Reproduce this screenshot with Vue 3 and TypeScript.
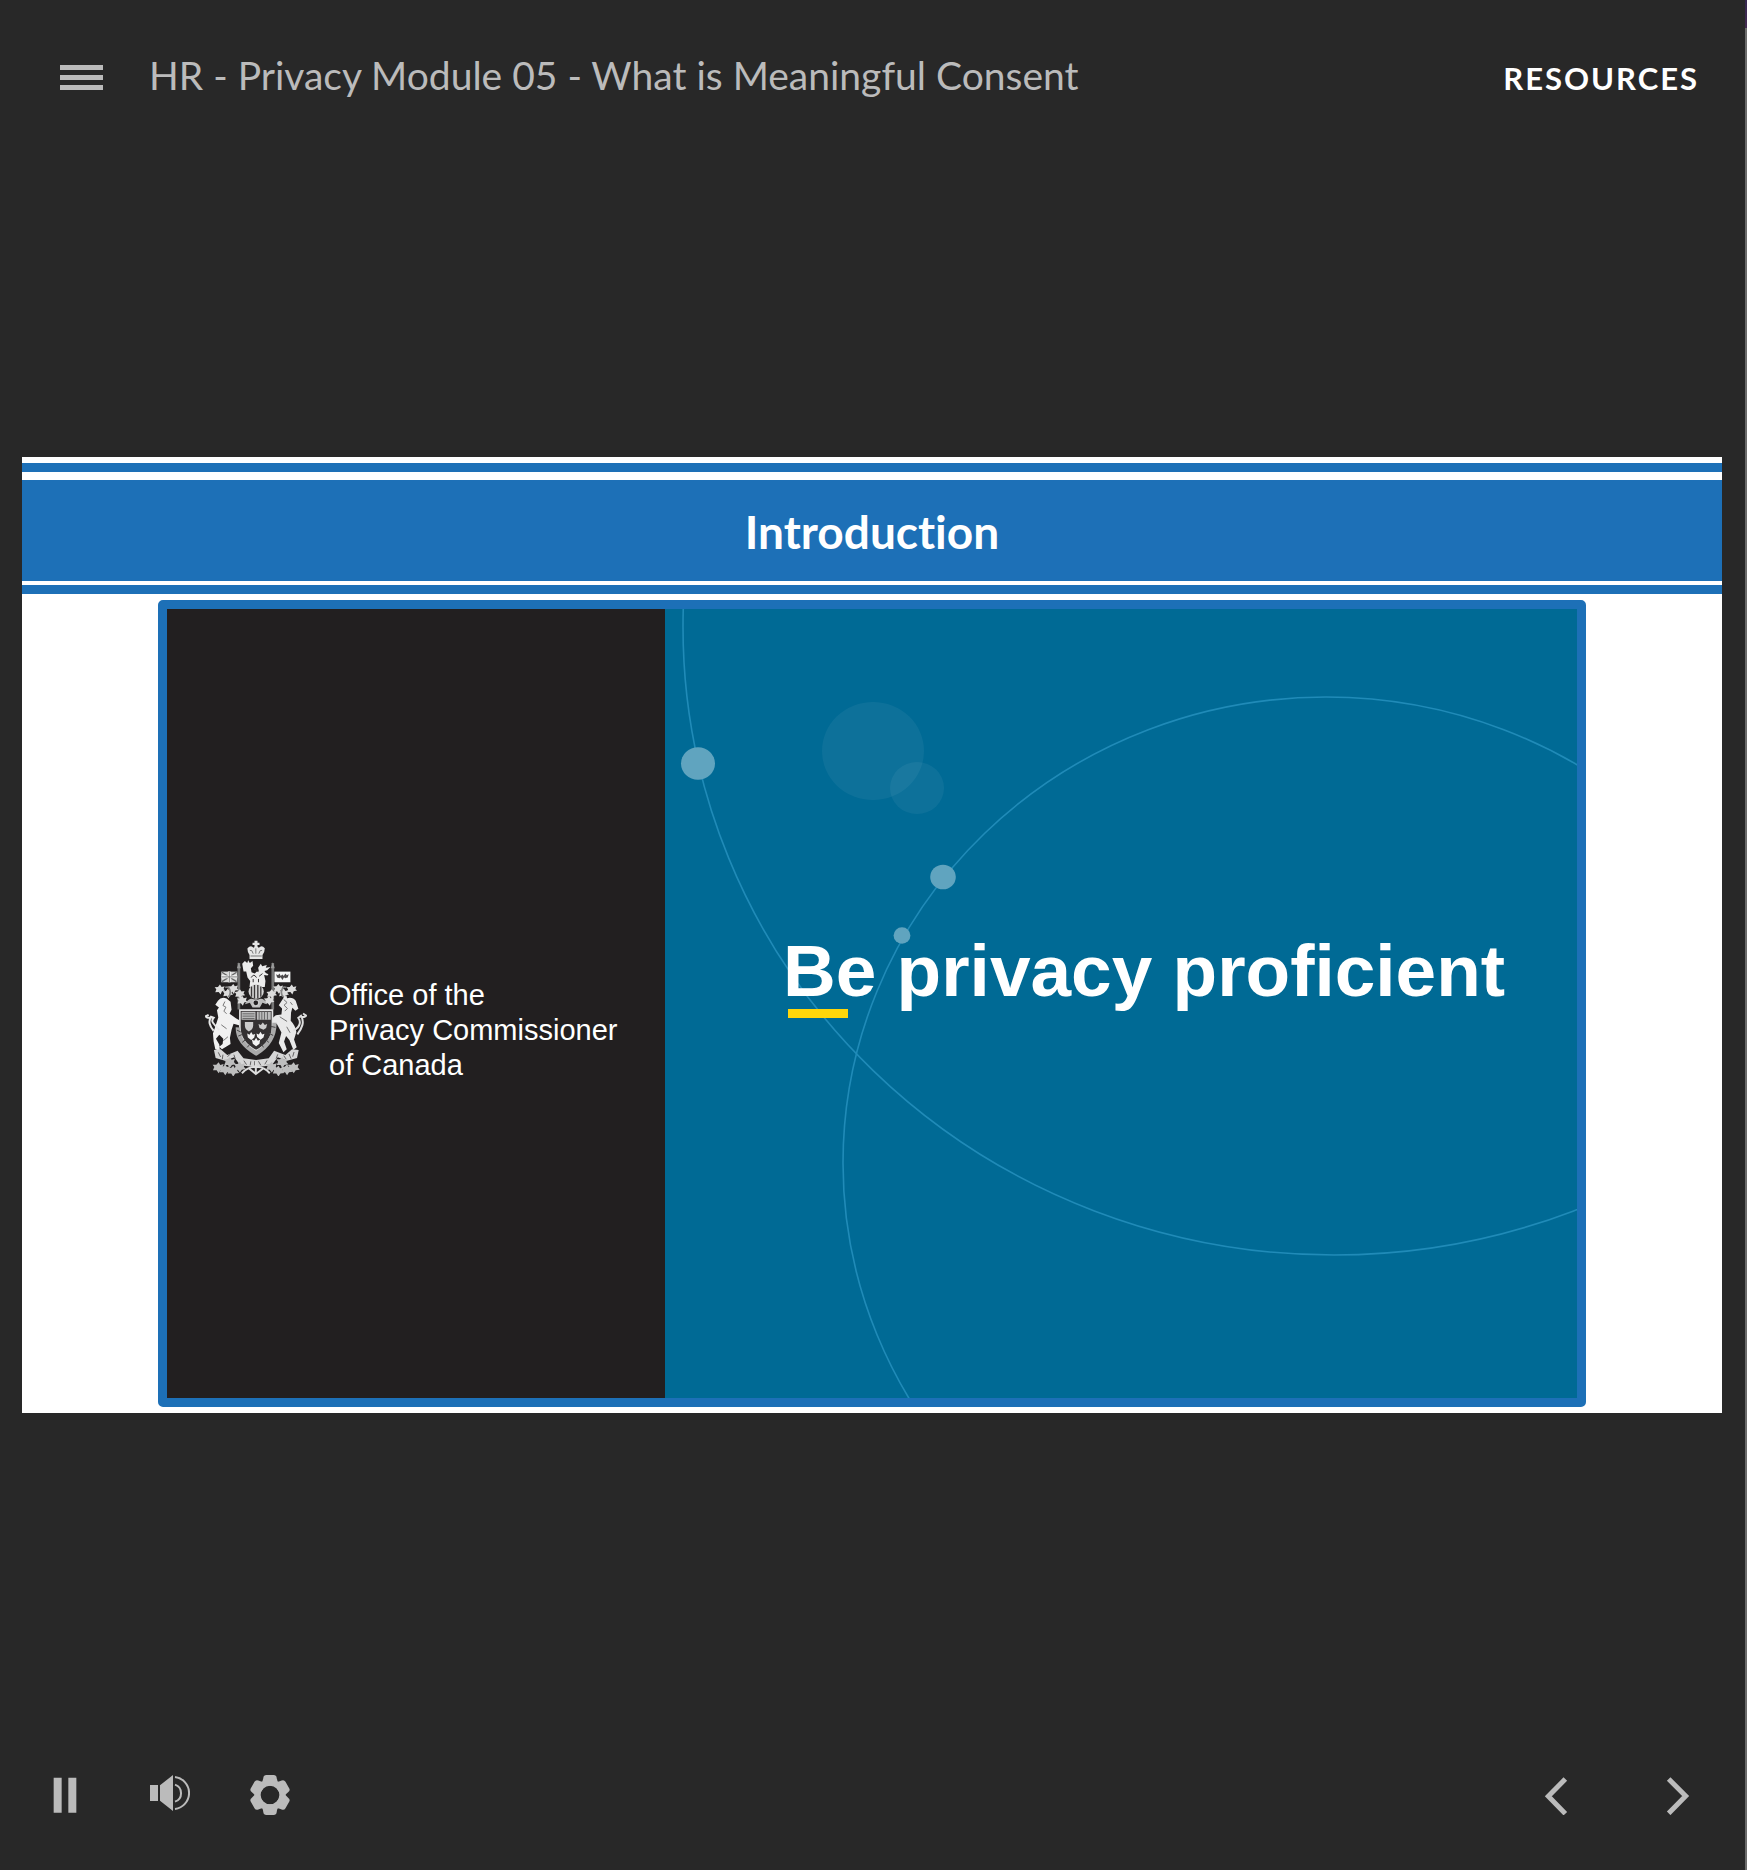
<script setup lang="ts">
import { ref } from 'vue'

const courseTitle = 'HR - Privacy Module 05 - What is Meaningful Consent'
const playing = ref(true)
const gearTeeth = [0, 60, 120, 180, 240, 300]
const leaves = [
  [88, 212], [112, 224], [128, 210], [148, 226], [155, 246], [236, 246], [244, 226], [264, 210], [280, 224], [304, 212],
]
const flowers = [
  [84, 446], [104, 452], [118, 430], [128, 456], [148, 444], [244, 444], [264, 456], [276, 430], [290, 452], [310, 446],
]
</script>

<template>
  <div class="player">
    <header class="topbar">
      <button class="icon-btn menu-btn" type="button" aria-label="Menu">
        <svg width="43" height="25" viewBox="0 0 43 25">
          <path d="M0 0H43V5H0ZM0 10H43V15H0ZM0 20H43V25H0Z" fill="currentColor" />
        </svg>
      </button>
      <h1 class="course-title">{{ courseTitle }}</h1>
      <button class="resources" type="button">RESOURCES</button>
    </header>

    <main class="stage">
      <section class="slide">
        <div class="rule rule-top"></div>
        <h2 class="slide-title">Introduction</h2>
        <div class="rule rule-bottom"></div>

        <div class="video">
          <div class="sponsor">
            <svg class="arms" viewBox="40 60 310 412" role="img" aria-label="Arms of Canada">
              <!-- crown -->
              <g fill="#e6e6e6">
                <path d="M192 65h9v6h6v7h-6v6h-9v-6h-6v-7h6z" />
                <path d="M171 88q10-12 18-2l8-6 8 6q9-10 18 2 0 12-7 20v12h-39v-12q-7-8-6-20z" />
              </g>
              <path d="M178 94q7-3 10 10M215 94q-7-3-10 10M196 88v16M180 111h34" fill="none" stroke="#777" stroke-width="3" />
              <!-- crest lion -->
              <path d="M155 134l8-8 7 6 3-8 5 8 8-6 2 14-7 8 2 12 10 4q4-8 12-8l-2-10 8-12 4 8 14-4-3 8 14-2-10 10-8 2 4 6 8 4-3 4-10-2 4 18-2 18h-46l2-18-8-10-4-18-8 0z" fill="#ececec" />
              <path d="M182 176q8-14 16 0M190 150l14 8M206 172l10-8M188 190v-10M204 190v-10" fill="none" stroke="#353233" stroke-width="3" />
              <!-- lances and flags -->
              <path d="M145 132v140M247 132v140" fill="none" stroke="#777" stroke-width="8" />
              <path d="M145 130l6 18h-12zM247 130l6 18h-12z" fill="#999" />
              <rect x="92" y="158" width="48" height="32" fill="#d8d8d8" />
              <path d="M94 160l44 28M138 160l-44 28" stroke="#666" stroke-width="4" />
              <path d="M92 174h48M116 158v32" stroke="#fff" stroke-width="8" />
              <path d="M92 174h48M116 158v32" stroke="#777" stroke-width="3" />
              <rect x="252" y="158" width="48" height="32" fill="#f6f6f6" />
              <path d="M257 166l6 3 4-5 4 7 5-4 4 4 5-7 4 5 6-3-3 10-8 2-3-3-5 8-5-8-4 3-7-2z" fill="#4c494a" />
              <!-- mantling -->
              <g fill="#dcdcdc">
                <path v-for="[x, y] in leaves" :key="`${x}-${y}`" :transform="`translate(${x} ${y})`" d="M0-15l5 7 9-2-3 8 5 5-10 2-4 10-6-8-10 1 3-9-5-6 10-1z" />
              </g>
              <path d="M104 206q10-6 14 8t-6 20M288 206q-10-6-14 8t6 20" fill="none" stroke="#858585" stroke-width="5" />
              <ellipse cx="197" cy="218" rx="23" ry="22" fill="#d4d4d4" />
              <path d="M183 203v31M192 198v40M202 198v40M211 203v31" stroke="#3b3839" stroke-width="4" />
              <path d="M163 256q14-22 28-14l6 6 6-6q16-8 27 14l-14-4-8 14h-22l-8-14z" fill="#bdbdbd" />
              <circle cx="196" cy="252" r="9" fill="#242122" stroke="#ccc" stroke-width="4" />
              <!-- supporters -->
              <path d="M82 246q10-14 26-7l12 10 3 24-6 12 20 14 14 8 2 15-24-7-6 18-5 25 2 18-26 16-8-8 10-8 2-16-12-12-10 12 10 17 2 20-14-5-5-24-2-24 8-24 8-24-4-22 6-8-11-8z" fill="#f1f1f1" />
              <path d="M86 334q-14-15-19-22t2-15l-8-3q-6 10-4 20t12 22M60 296q-14 2-14-4l8-4" fill="none" stroke="#e7e7e7" stroke-width="6" />
              <path d="M103 248l-6 12 9 5-6 12 8 8M92 318l16 12M98 366l14-12" fill="none" stroke="#777" stroke-width="3" />
              <path d="M280 236l8-7 2 9q18-4 26 8l8 24-9 6-9-9-4 14-1 25q14 14 17 34l-7 22 8 24-10 8-12-30-10-12-6 16 8 24-10 9-14-28 8-32-14-26-20 8-5-14 22-20 17-2 2-18-10-10z" fill="#e9e9e9" />
              <path d="M280 242l10 9-9 8 10 10-8 8M300 250l6 8M268 294l22 14M289 324l10 18" fill="none" stroke="#747474" stroke-width="3" />
              <path d="M309 336q17-10 19-21t-4-18l8-6q8 14 4 28t-15 28M331 294q16 2 16-4l-9-6" fill="none" stroke="#dedede" stroke-width="6" />
              <!-- shield and ribbon -->
              <path d="M148 274h98v52q0 44-49 70-49-26-49-70z" fill="#343132" stroke="#e2e2e2" stroke-width="5" />
              <path d="M153 279h42v24h-42zM199 279h42v24h-42z" fill="#bcbcbc" />
              <path d="M156 285h36M156 292h36M156 299h36M206 279v24M214 279v24M222 279v24M231 279v24" stroke="#686868" stroke-width="3" />
              <path d="M163 310h25v10q0 12-13 18-12-6-12-18zM204 316l7 3 6-8 6 8 7-3-3 12-8 5-12-5z" fill="#ccc" />
              <path d="M170 344l7 4 5-8 5 8 7-2-3 11-9 7-10-8zM198 344l7 3 5-8 5 8 7-2-3 11-9 7-10-8zM184 362l7 4 6-9 5 9 7-3-2 12-10 8-10-8z" fill="#f4f4f4" />
              <path d="M142 326q-2 44 55 78 56-34 55-92" fill="none" stroke="#aaa" stroke-width="13" />
              <path d="M139 334l12 6M143 352l13-5M155 371l10-8M170 386l8-9M219 386l-6-10M235 371l-9-8M248 350l-12-6M255 326l-13-3" stroke="#474546" stroke-width="3" />
              <!-- motto scroll -->
              <path d="M70 394l20-2 20 17 31-13 18 23 38 5 38-5 16-23 34 13 20-17 20 2-5 24-30 8-28-10-18 24-47 6-48-6-18-24-28 10-28-8z" fill="#d6d6d6" />
              <path d="M83 401l7 14M97 408l-2 14M111 414l8-8M130 408l4 12M160 426l8 12M181 428l-2 12M192 428v12M204 428l7 12M230 425l-7 12M262 407l-5 13M280 411l7 10M296 406l6 14M311 400l-4 14" stroke="#646263" stroke-width="3" />
              <!-- floral compartment -->
              <g fill="#bebebe">
                <path v-for="[x, y] in flowers" :key="`${x}-${y}`" :transform="`translate(${x} ${y})`" d="M0-15l5 8 10-3-3 10 6 7-12 2-6 9-6-9-11 0 4-10-5-7 11 0z" />
              </g>
              <path d="M154 464q22-23 42-18 21-5 42 18M174 448l22 18 24-18M196 430v34" fill="none" stroke="#ddd" stroke-width="6" />
            </svg>
            <p class="office">Office of the<br />Privacy Commissioner<br />of Canada</p>
          </div>
          <div class="tagline">
            <svg class="orbits" viewBox="664 609 912 789" preserveAspectRatio="none" aria-hidden="true">
              <g fill="none" stroke="#208bb8" stroke-width="1.6">
                <ellipse cx="1333" cy="627" rx="651" ry="628" />
                <ellipse cx="1325" cy="1163" rx="483" ry="466" />
              </g>
              <ellipse cx="872" cy="751" rx="51" ry="49" fill="#fff" fill-opacity=".05" />
              <ellipse cx="916" cy="788" rx="27" ry="26" fill="#fff" fill-opacity=".05" />
              <g fill="#60a4bf">
                <ellipse cx="697" cy="763.5" rx="17" ry="16.3" />
                <ellipse cx="942" cy="877" rx="12.8" ry="12.3" />
                <ellipse cx="901" cy="935.5" rx="8.4" ry="8.2" />
              </g>
            </svg>
            <p class="slogan">Be privacy proficient</p>
          </div>
        </div>
      </section>
    </main>

    <footer class="controls">
      <button class="icon-btn pause-btn" type="button" :aria-label="playing ? 'Pause' : 'Play'" @click="playing = !playing">
        <svg width="40" height="40" viewBox="0 0 120 120" fill="currentColor">
          <path v-if="playing" d="M26 8H50V113H26ZM70 8H94V113H70Z" />
          <path v-else d="M26 8L104 60L26 113Z" />
        </svg>
      </button>
      <button class="icon-btn" type="button" aria-label="Volume">
        <svg width="40" height="40" viewBox="0 0 120 120">
          <path d="M0 30H24V78H0ZM30 31L69 0V108L30 77Z" fill="currentColor" />
          <path d="M75 6A48.4 48.4 0 0 1 75 102M75 29A27 27 0 0 1 75 80" fill="none" stroke="currentColor" stroke-width="6" />
        </svg>
      </button>
      <button class="icon-btn" type="button" aria-label="Settings">
        <svg width="40" height="40" viewBox="0 0 120 120">
          <circle cx="60" cy="60" r="37" fill="none" stroke="currentColor" stroke-width="18" />
          <g fill="currentColor">
            <path v-for="angle in gearTeeth" :key="angle" :transform="`rotate(${angle} 60 60)`" d="M33 26Q38 22 40 8Q41 0 49 0H71Q79 0 80 8Q82 22 87 26L76 32H44Z" />
          </g>
        </svg>
      </button>
      <nav class="paging">
        <button class="icon-btn" type="button" aria-label="Previous">
          <svg width="40" height="40" viewBox="0 0 120 120">
            <path d="M88 12L37 64L88 116" fill="none" stroke="currentColor" stroke-width="15" />
          </svg>
        </button>
        <button class="icon-btn" type="button" aria-label="Next">
          <svg width="40" height="40" viewBox="0 0 120 120">
            <path d="M32 12L83 63L32 115" fill="none" stroke="currentColor" stroke-width="15" />
          </svg>
        </button>
      </nav>
    </footer>
  </div>
</template>

<style>
body {
  margin: 0;
  background: #282828;
}
</style>

<style scoped>
.player {
  position: relative;
  box-sizing: border-box;
  display: flex;
  flex-direction: column;
  min-height: 100vh;
  background: #282828;
  color: #bbb;
  font-family: Lato, "Liberation Sans", sans-serif;
}

.player::after {
  content: "";
  position: absolute;
  top: 0;
  right: 0;
  bottom: 0;
  width: 2px;
  background: linear-gradient(#35284f, #432a50 28px, #6c6c6c 28px);
}

button {
  margin: 0;
  padding: 0;
  border: 0;
  background: none;
  color: inherit;
  font: inherit;
  cursor: pointer;
}

.topbar {
  box-sizing: border-box;
  display: flex;
  align-items: baseline;
  height: 150px;
  padding: 51px 48px 0 60px;
}

.course-title {
  margin: 0 0 0 46px;
  font-size: 39px;
  font-weight: 400;
  line-height: 48px;
}

.resources {
  margin-left: auto;
  color: #fff;
  font-size: 31px;
  font-weight: 700;
  letter-spacing: 2px;
}

.stage {
  flex: 1;
  display: flex;
  align-items: center;
  padding: 0 25px 0 22px;
}

.slide {
  flex: 1;
  padding: 6px 0;
  background: #fff;
}

.rule {
  height: 9px;
  background: #1d70b7;
}

.rule-top {
  margin-bottom: 8px;
}

.rule-bottom {
  margin: 4px 0 6px;
}

.slide-title {
  margin: 0;
  padding-top: 2px;
  background: #1d70b7;
  color: #fff;
  font-size: 46px;
  font-variant-ligatures: none;
  font-weight: 700;
  line-height: 99px;
  text-align: center;
}

.video {
  box-sizing: border-box;
  display: flex;
  width: 84%;
  aspect-ratio: 1428 / 807;
  margin: 0 auto;
  border: 9px solid #1d70b7;
  border-radius: 5px;
  background: #006a95;
}

.sponsor {
  box-sizing: border-box;
  display: flex;
  align-items: center;
  gap: 22px;
  width: 498px;
  padding: 8px 0 0 37px;
  background: #221f20;
}

.arms {
  width: 103px;
  height: 137px;
}

.office {
  margin: 46px 0 0;
  color: #fff;
  font: 29px/35px "Liberation Sans", Arial, sans-serif;
}

.tagline {
  position: relative;
  flex: 1;
  display: flex;
  align-items: center;
}

.orbits {
  position: absolute;
  inset: 0;
  width: 100%;
  height: 100%;
}

.slogan {
  position: relative;
  margin: 0 0 66px 118px;
  color: #fff;
  font: bold 73px/84px "Liberation Sans", Arial, sans-serif;
  white-space: nowrap;
}

.slogan::after {
  content: "";
  position: absolute;
  left: 5px;
  top: 80px;
  width: 60px;
  height: 9px;
  background: #ffd60a;
}

.controls {
  display: flex;
  align-items: center;
  height: 150px;
  padding: 0 8px 0 10px;
}

.controls .icon-btn {
  display: flex;
  justify-content: center;
  width: 100px;
}

.controls .pause-btn {
  width: 110px;
}

.paging {
  display: flex;
  margin-left: auto;
}

.paging .icon-btn {
  width: 122px;
}
</style>
